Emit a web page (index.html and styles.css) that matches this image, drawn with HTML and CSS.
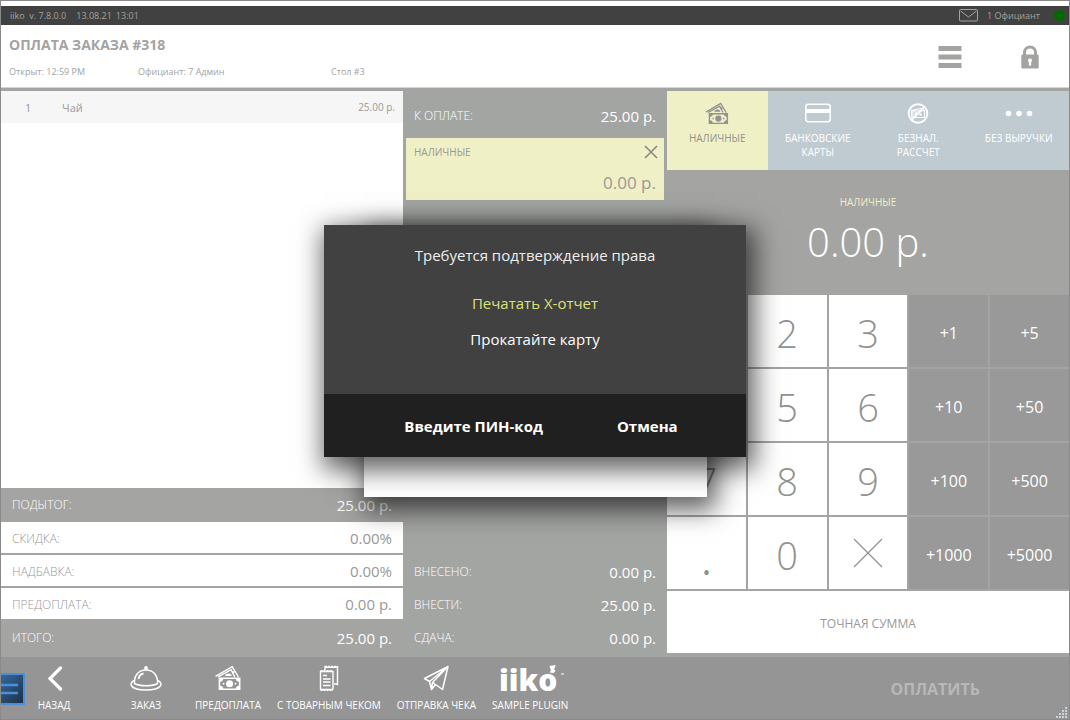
FILE: index.html
```html
<!DOCTYPE html>
<html lang="ru">
<head>
<meta charset="utf-8">
<meta name="viewport" content="width=device-width, initial-scale=1">
<title>Оплата заказа #318</title>
<link rel="stylesheet" href="styles.css">
</head>
<body>
<svg class="defs" aria-hidden="true">
  <symbol id="cash" viewBox="0 0 26 25">
    <path d="M1 11 17 1.500 23 11.500M3.500 11.500 16 4.500 19.500 11.500" fill="none" stroke="currentColor" stroke-width="1.300"/>
    <circle cx="18" cy="7" r="1.200" fill="currentColor"/>
    <path d="M10 10.500a3.500 2.500 0 0 1 6-1.500l.500 1.500z" fill="currentColor"/>
    <path d="M4 12h21v12H4zM5.500 13.500v9h18v-9z" fill="currentColor" fill-rule="evenodd"/>
    <path d="M5 13h3.500a3 3 0 0 1-3.500 3zM24 13h-3.500a3 3 0 0 0 3.500 3zM5 23h3.500a3 3 0 0 0-3.500-3zM24 23h-3.500a3 3 0 0 1 3.500-3z" fill="currentColor"/>
    <circle cx="14.500" cy="18" r="3.400" fill="currentColor"/>
    <circle cx="8.800" cy="18" r=".9" fill="currentColor"/>
    <circle cx="20.200" cy="18" r=".9" fill="currentColor"/>
  </symbol>
</svg>

<div class="app">
  <div class="statusbar">
    <span class="version">iiko&nbsp; v. 7.8.0.0</span>
    <time>13.08.21</time>
    <time class="clock">13:01</time>
    <svg class="mail" viewBox="0 0 20 13" aria-hidden="true"><rect x=".5" y=".5" width="18" height="11.500" rx="1" fill="none" stroke="currentColor"/><path d="M1.500 2 9.500 8 17.500 2" fill="none" stroke="currentColor"/></svg>
    <span class="user">1 Официант</span>
    <span class="online"></span>
  </div>

  <header class="header">
    <div class="order">
      <h1>ОПЛАТА ЗАКАЗА #318</h1>
      <div class="meta"><span>Открыт: 12:59 PM</span><span>Официант: 7 Админ</span><span>Стол #3</span></div>
    </div>
    <button class="headbtn" type="button" aria-label="Меню"><svg width="24" height="24" viewBox="0 0 24 24"><path d="M.500 1h23v5h-23zM.500 9.500h23v5h-23zM.500 18h23v5h-23z" fill="currentColor"/></svg></button>
    <button class="headbtn" type="button" aria-label="Блокировка"><svg width="24" height="24" viewBox="0 0 24 24"><path d="M6.500 11V7.500a5.500 5.500 0 0 1 11 0V11" fill="none" stroke="currentColor" stroke-width="3"/><path d="M4.500 9.500h15a1.200 1.200 0 0 1 1.200 1.200v11.600a1.200 1.200 0 0 1-1.200 1.200h-15a1.200 1.200 0 0 1-1.200-1.200V10.700a1.200 1.200 0 0 1 1.200-1.200zM12 13.500a2 2 0 0 0-1.200 3.600v3.400h2.400v-3.400A2 2 0 0 0 12 13.500z" fill="currentColor" fill-rule="evenodd"/></svg></button>
  </header>

  <main class="main">
    <section class="bill">
      <div class="lines">
        <div class="line"><span class="qty">1</span><span class="dish">Чай</span><span class="price">25.00 р.</span></div>
      </div>
      <dl class="sums">
        <div class="sum strong"><dt>ПОДЫТОГ:</dt><dd>25.00 р.</dd></div>
        <div class="sum"><dt>СКИДКА:</dt><dd>0.00%</dd></div>
        <div class="sum"><dt>НАДБАВКА:</dt><dd>0.00%</dd></div>
        <div class="sum"><dt>ПРЕДОПЛАТА:</dt><dd>0.00 р.</dd></div>
        <div class="sum strong"><dt>ИТОГО:</dt><dd>25.00 р.</dd></div>
      </dl>
    </section>

    <section class="payments">
      <dl class="due"><dt>К ОПЛАТЕ:</dt><dd>25.00 р.</dd></dl>
      <div class="payment">
        <div class="payhead"><span>НАЛИЧНЫЕ</span>
          <button class="remove" type="button" aria-label="Удалить"><svg width="14" height="14" viewBox="0 0 14 14"><path d="M1 1 13 13M13 1 1 13" stroke="currentColor" stroke-width="1.600"/></svg></button></div>
        <div class="paysum">0.00 р.</div>
      </div>
      <dl class="balance">
        <div><dt>ВНЕСЕНО:</dt><dd>0.00 р.</dd></div>
        <div><dt>ВНЕСТИ:</dt><dd>25.00 р.</dd></div>
        <div><dt>СДАЧА:</dt><dd>0.00 р.</dd></div>
      </dl>
    </section>

    <section class="register">
      <div class="types">
        <button class="type active" type="button"><svg width="24" height="23"><use href="#cash"/></svg><span>НАЛИЧНЫЕ</span></button>
        <button class="type" type="button"><svg width="28" height="23" viewBox="0 0 28 23"><rect x="1.800" y="2.300" width="24.400" height="17.400" rx="2.500" fill="none" stroke="currentColor" stroke-width="1.500"/><path d="M1.500 7h25v4h-25z" fill="currentColor"/></svg><span>БАНКОВСКИЕ КАРТЫ</span></button>
        <button class="type" type="button"><svg width="24" height="23" viewBox="0 0 24 23"><circle cx="12" cy="11.500" r="9.300" fill="none" stroke="currentColor" stroke-width="1.900"/><path d="M5.500 8.500 15 6.500l1 2.500H7v6H5.500zM8.500 15.500H18.500v-7h-1.500" fill="none" stroke="currentColor" stroke-width="1.100"/><circle cx="10" cy="11.500" r="1.500" fill="currentColor"/><circle cx="14.500" cy="12.500" r="1.200" fill="currentColor"/><path d="M18.500 5 5.500 18" stroke="currentColor" stroke-width="2"/></svg><span>БЕЗНАЛ. РАССЧЕТ</span></button>
        <button class="type" type="button"><svg width="28" height="23" viewBox="0 0 28 23"><g fill="currentColor"><circle cx="3.500" cy="11.500" r="2.800"/><circle cx="14" cy="11.500" r="2.800"/><circle cx="24.500" cy="11.500" r="2.800"/></g></svg><span>БЕЗ ВЫРУЧКИ</span></button>
      </div>
      <div class="amount"><span class="kind">НАЛИЧНЫЕ</span><output>0.00 р.</output></div>
      <div class="keypad">
        <button class="key" type="button">1</button><button class="key" type="button">2</button><button class="key" type="button">3</button><button class="key add" type="button">+1</button><button class="key add" type="button">+5</button>
        <button class="key" type="button">4</button><button class="key" type="button">5</button><button class="key" type="button">6</button><button class="key add" type="button">+10</button><button class="key add" type="button">+50</button>
        <button class="key" type="button">7</button><button class="key" type="button">8</button><button class="key" type="button">9</button><button class="key add" type="button">+100</button><button class="key add" type="button">+500</button>
        <button class="key point" type="button">.</button><button class="key" type="button">0</button><button class="key clear" type="button" aria-label="Очистить"><svg width="30" height="30" viewBox="0 0 30 30"><path d="M1 1 29 29M29 1 1 29" stroke="currentColor" stroke-width="1.300"/></svg></button><button class="key add" type="button">+1000</button><button class="key add" type="button">+5000</button>
      </div>
      <button class="exact" type="button">ТОЧНАЯ СУММА</button>
    </section>
  </main>

  <footer class="footer">
    <button class="tool back" type="button"><svg width="34" height="26" viewBox="0 0 34 26"><path d="M23.500 3 13 13.500 23.500 24" fill="none" stroke="currentColor" stroke-width="3.200" stroke-linecap="round"/></svg><span>НАЗАД</span></button>
    <button class="tool" type="button"><svg width="34" height="26" viewBox="0 0 34 26" fill="none" stroke="currentColor" stroke-width="1.500"><path d="M5.500 18.500C5 10 10 5 17 5s12 5 11.500 13.500c-5 3-18 3-23 0z"/><path d="M5.500 15.500C-.500 17.500 0 25 17 25s17.500-7.500 11.500-9.500"/><path d="M9.500 14c.500-3 2.500-5 5-5.500" stroke-width="1.800"/><circle cx="17" cy="3" r="1.200" fill="currentColor"/></svg><span>ЗАКАЗ</span></button>
    <button class="tool" type="button"><svg width="28" height="26"><use href="#cash"/></svg><span>ПРЕДОПЛАТА</span></button>
    <button class="tool" type="button"><svg width="24" height="26" viewBox="0 0 24 26" fill="none" stroke="currentColor" stroke-width="1.400"><path d="M8 5V1.700l1.500.500h9l2-.500V19.500l-1.500-.500h-2"/><path d="M8 1.700h12.500" stroke-width="1.800" stroke-dasharray="2 1"/><path d="M3.500 6v18.500M16 6v18.500M3.500 6.500H16M3.500 24.500H16"/><path d="M3.500 6H16M3.500 25H16" stroke-width="1.800" stroke-dasharray="2 1"/><path d="M6 10.500h4M6 14h7.500M6 17h7.500M6 20.500h7.500"/></svg><span>С ТОВАРНЫМ ЧЕКОМ</span></button>
    <button class="tool" type="button"><svg width="26" height="26" viewBox="0 0 26 26" fill="none" stroke="currentColor" stroke-width="1.500" stroke-linejoin="round"><path d="M25 1.500 1.500 13.500 6.500 16.500 8.500 24.500 12.500 19.500 19.500 24.500zM25 1.500 6.500 16.500M25 1.500 9.500 17.500 8.500 24.500M9.500 17.500 12.500 19.500"/></svg><span>ОТПРАВКА ЧЕКА</span></button>
    <button class="tool" type="button"><span class="logo">iiko<svg class="hat" width="16" height="10" viewBox="0 0 16 10"><path d="M1.500 1 7.500 0 7 2.500 6 4 7.500 6 5.500 8 1.500 7.500 3 5.500 2 3z" fill="currentColor"/><path d="M13 9h3" stroke="currentColor"/></svg></span><span>SAMPLE PLUGIN</span></button>
    <button class="pay" type="button" disabled>ОПЛАТИТЬ</button>
    <svg class="grip" width="12" height="12" viewBox="0 0 12 12" aria-hidden="true"><path d="M0 10h2v2H0zM3 10h2v2H3zM6 10h2v2H6zM9 10h2v2H9zM3 7h2v2H3zM6 7h2v2H6zM9 7h2v2H9zM6 4h2v2H6zM9 4h2v2H9zM9 1h2v2H9z" fill="#ccd2da"/></svg>
  </footer>

  <button class="sidetab" type="button" aria-label="Панель"><svg width="18" height="12" viewBox="0 0 18 12"><path d="M0 2h17M0 10h17" stroke="#4a90d9" stroke-width="2.500"/></svg></button>

  <div class="overlay">
    <div class="sheet"></div>
    <div class="dialog" role="dialog" aria-modal="true" aria-labelledby="dlg-title">
      <div class="message">
        <p id="dlg-title" class="title">Требуется подтверждение права</p>
        <p class="right">Печатать X-отчет</p>
        <p class="hint">Прокатайте карту</p>
      </div>
      <div class="actions"><button type="button">Введите ПИН-код</button><button type="button">Отмена</button></div>
    </div>
  </div>
</div>
</body>
</html>
```
FILE: styles.css
```css
* { box-sizing: border-box; }
body {
  margin: 0;
  font-family: "Open Sans", "Noto Sans", sans-serif;
  font-size: 12px;
  color: #999;
}
h1, p, dl, dd { margin: 0; }
button {
  margin: 0;
  padding: 0;
  border: 0;
  background: none;
  color: inherit;
  font: inherit;
}
svg { display: block; }
.defs { position: absolute; width: 0; height: 0; }

.app {
  position: relative;
  display: flex;
  flex-direction: column;
  min-height: 100vh;
  border: 1px solid #8a8a8a;
  background: #a4a4a2;
}

.statusbar {
  display: flex;
  align-items: center;
  height: 24px;
  padding: 0 4px 0 9px;
  border-top: 5px solid #fff;
  background: #404140;
  color: #a3a3a1;
  font-size: 9px;
}
.version { margin-right: 10px; }
.clock { margin-left: 4px; }
.mail { width: 20px; height: 13px; margin-left: auto; }
.user { margin: 0 14px 0 8px; }
.online { width: 11px; height: 11px; border-radius: 50%; background: #006a00; }

.header {
  display: flex;
  align-items: center;
  height: 63px;
  padding: 1px 27px 0 0;
  border-bottom: 1px solid #d4d4d4;
  background: #fff;
  color: #a3a3a1;
}
.order { flex: 1; padding: 1px 0 0 8px; }
h1 { font-size: 14px; line-height: 20px; font-weight: 700; }
.meta {
  display: grid;
  grid-template-columns: 129px 193px auto;
  margin-top: 9px;
  font-size: 9px;
  line-height: 16px;
}
.headbtn { margin-left: 56px; }

.main {
  flex: 1;
  display: grid;
  grid-template-columns: 402fr 264fr 402fr;
  padding: 3px 0 2px;
}

.bill { display: flex; flex-direction: column; background: #fff; }
.lines { flex: 1; }
.line {
  display: flex;
  align-items: center;
  height: 32px;
  padding: 0 8px 0 24px;
  background: #f6f6f6;
  font-size: 11px;
}
.qty { width: 37px; color: #8b9bab; }
.dish { flex: 1; }
.price { font-size: 10px; }
.sum {
  display: flex;
  align-items: center;
  justify-content: space-between;
  height: 33px;
  padding: 1px 11px 0;
  border-bottom: 2px solid #a4a4a2;
  font-weight: 300;
}
.sum dd, .due dd, .balance dd { font-size: 15px; font-weight: 400; }
.strong { height: 34px; background: #a4a4a2; color: #fff; }
.strong dd, .due dd { font-weight: 500; }

.payments {
  display: flex;
  flex-direction: column;
  padding: 0 3px;
  background: #a3a5a3;
  color: #fff;
}
.due, .balance div {
  display: flex;
  align-items: center;
  justify-content: space-between;
  padding: 0 8px;
}
.due { height: 47px; padding-top: 2px; font-weight: 300; }
.payment { height: 62px; padding: 6px 6px 6px 8px; background: #f0f0c6; color: #999; }
.payhead { display: flex; justify-content: space-between; font-size: 10px; line-height: 16px; }
.remove { color: #888; }
.paysum { margin-top: 12px; padding-right: 2px; text-align: right; font-size: 17px; line-height: 22px; }
.balance { margin-top: auto; padding-bottom: 1px; font-weight: 300; }
.balance div { height: 33px; }

.register { display: flex; flex-direction: column; }
.types { display: grid; grid-template-columns: repeat(4, 1fr); height: 79px; background: #c0cbd1; }
.type {
  display: flex;
  flex-direction: column;
  align-items: center;
  padding: 11px 8px 0;
  color: #fff;
  font-size: 10px;
  line-height: 14px;
}
.type span { margin-top: 6px; }
.active { background: #f0f0c6; color: #929290; }
.amount {
  display: flex;
  flex-direction: column;
  align-items: center;
  height: 125px;
  padding-top: 24px;
  color: #fff;
}
.kind { color: #f0f0c6; font-size: 10px; line-height: 16px; }
.amount output { font-size: 40px; line-height: 64px; font-weight: 300; }
.keypad {
  flex: 1;
  display: grid;
  grid-template-columns: repeat(5, 1fr);
  grid-auto-rows: 1fr;
  gap: 2px;
}
.key {
  display: flex;
  align-items: center;
  justify-content: center;
  min-height: 54px;
  padding-top: 3px;
  background: #fff;
  color: #929290;
  font-size: 38px;
  line-height: 44px;
  font-weight: 300;
}
.add { background: #999; color: #fff; font-size: 16px; font-weight: 400; }
.point { padding-top: 14px; font-weight: 400; }
.clear { padding-top: 0; }
.exact { height: 62px; margin: 2px 0; padding-top: 2px; background: #fff; color: #999; font-size: 12px; }

.footer {
  position: relative;
  display: flex;
  height: 62px;
  padding: 8px 89px 0 12px;
  background: #959595;
  color: #fff;
}
.tool {
  display: flex;
  flex-direction: column;
  align-items: center;
  min-width: 82px;
  padding: 0 8px;
  font-size: 10px;
  line-height: 14px;
  white-space: nowrap;
}
.tool > svg, .logo { height: 26px; margin-bottom: 7px; }
.back { margin-right: 10px; }
.logo { position: relative; padding-right: 4px; font-size: 30px; line-height: 30px; font-weight: 800; }
.hat { position: absolute; top: 0; right: -3px; }
.pay { align-self: flex-start; margin-left: auto; padding-top: 14px; color: #b8b8b8; font-size: 16px; line-height: 20px; font-weight: 700; }
.grip { position: absolute; right: 1px; bottom: 1px; }

.sidetab {
  position: absolute;
  left: 0;
  bottom: 14px;
  padding: 8px 4px 8px 0;
  border: 2px solid #4a90d9;
  border-left: 0;
  background: linear-gradient(135deg, #34699c, #1d3146);
}

.overlay {
  position: absolute;
  inset: 224px 0 auto;
  display: grid;
  justify-items: center;
}
.sheet, .dialog { grid-area: 1 / 1; box-shadow: 4px 8px 24px 5px rgba(0, 0, 0, .62); }
.sheet { width: 343px; margin-bottom: -40px; background: #fff; }
.dialog { width: 422px; max-width: 100%; color: #fff; font-size: 15px; line-height: 20px; text-align: center; }
.message { padding: 20px 20px 45px; background: #404140; }
.title { color: #eee; }
.right { margin-top: 28px; color: #dfe07a; }
.hint { margin-top: 16px; }
.actions { display: flex; justify-content: center; gap: 74px; padding: 22px 0 21px 12px; background: #202020; }
.actions button { font-weight: 700; }
```
